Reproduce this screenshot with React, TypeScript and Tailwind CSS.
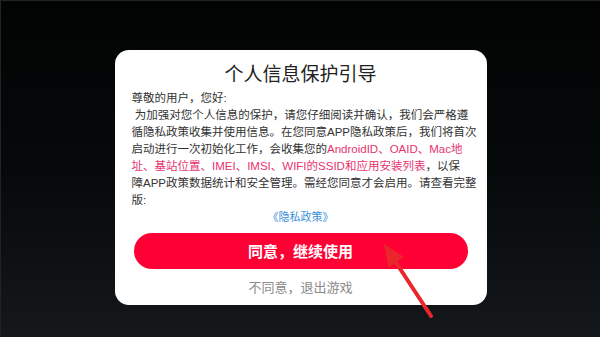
import React from "react";

const font = { fontFamily: '"Liberation Sans", "Noto Sans CJK SC", sans-serif' };

export default function App() {
  return (
    <div
      className="relative w-[600px] h-[337px] overflow-hidden flex justify-center pt-[49px] bg-gradient-to-b from-[#020404] via-[#06090a] to-[#15181b] border-t border-l border-[#222]"
      style={font}
    >
      <div className="w-[372px] h-[255px] bg-white rounded-[14px] flex flex-col items-center pt-[9px]">
        <div className="text-[19px] leading-[27px] text-[#222]" style={{ fontFamily: '"Noto Sans CJK SC", sans-serif' }}>
          个人信息保护引导
        </div>
        <div className="w-full px-[17px] mt-[4px] text-[11.5px] leading-[17px] text-[#333] whitespace-nowrap">
          <div>尊敬的用户，您好:</div>
          <div>&nbsp;为加强对您个人信息的保护，请您仔细阅读并确认，我们会严格遵</div>
          <div>循隐私政策收集并使用信息。在您同意APP隐私政策后，我们将首次</div>
          <div>
            启动进行一次初始化工作，会收集您的
            <span className="text-[#e8336e]">AndroidID、OAID、Mac地</span>
          </div>
          <div>
            <span className="text-[#e8336e]">址、基站位置、IMEI、IMSI、WIFI的SSID和应用安装列表</span>，以保
          </div>
          <div>障APP政策数据统计和安全管理。需经您同意才会启用。请查看完整</div>
          <div>版:</div>
          <div className="text-center text-[11px] text-[#3b8fd9]">《隐私政策》</div>
        </div>
        <div className="mt-[7px] w-[334px] h-[36px] rounded-full bg-[#ff0035] flex items-center justify-center text-white text-[15px] font-semibold" style={{ fontFamily: '"Noto Sans CJK SC", sans-serif' }}>
          同意，继续使用
        </div>
        <div className="mt-[8px] text-[13px] leading-[20px] text-[#8a8a8a]" style={{ fontFamily: '"Noto Sans CJK SC", sans-serif' }}>
          不同意，退出游戏
        </div>
      </div>
      <svg className="absolute left-0 top-0" width="600" height="337" viewBox="0 0 600 337">
        <line x1="430" y1="315" x2="394" y2="260" stroke="#e8262b" strokeWidth="4" strokeLinecap="round" />
        <polygon points="383,243 403,256 387.5,267" fill="#e8262b" />
      </svg>
    </div>
  );
}
